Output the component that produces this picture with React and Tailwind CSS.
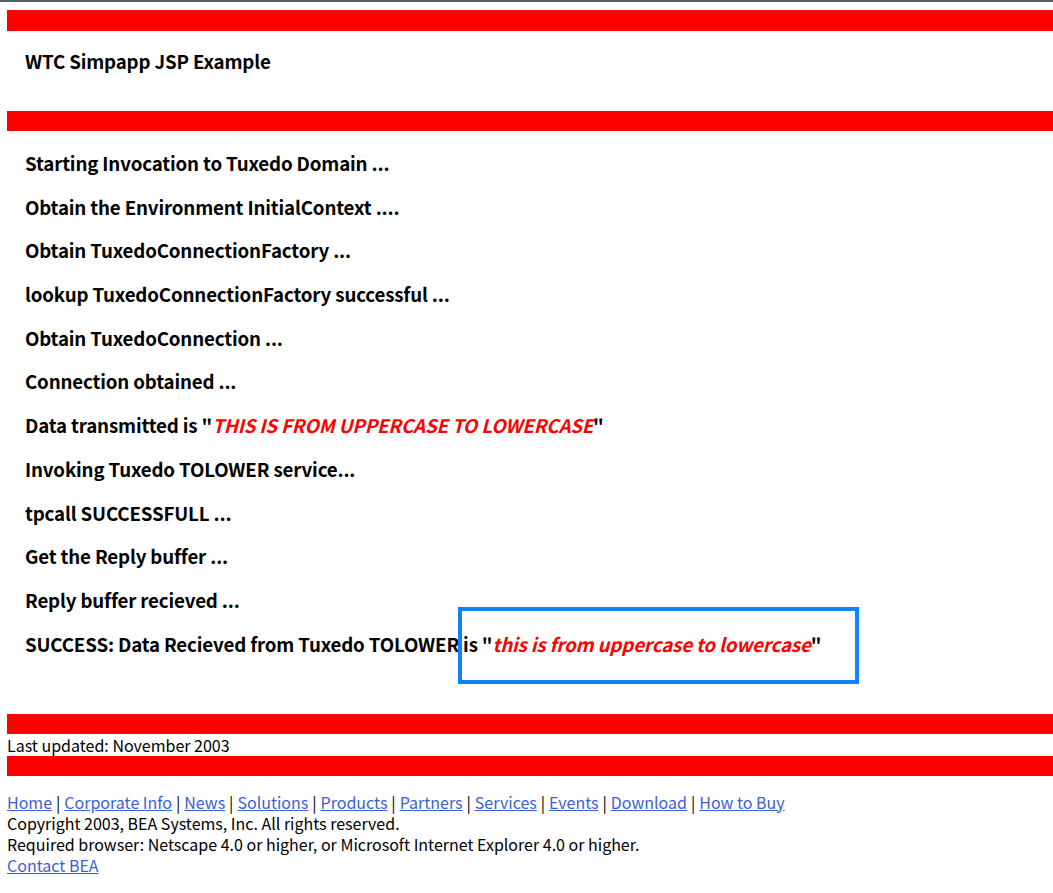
import React from "react";

const steps = [
  "Starting Invocation to Tuxedo Domain ...",
  "Obtain the Environment InitialContext ....",
  "Obtain TuxedoConnectionFactory ...",
  "lookup TuxedoConnectionFactory successful ...",
  "Obtain TuxedoConnection ...",
  "Connection obtained ...",
  null,
  "Invoking Tuxedo TOLOWER service...",
  "tpcall SUCCESSFULL ...",
  "Get the Reply buffer ...",
  "Reply buffer recieved ...",
];

const links = [
  "Home",
  "Corporate Info",
  "News",
  "Solutions",
  "Products",
  "Partners",
  "Services",
  "Events",
  "Download",
  "How to Buy",
];

const RedBar = ({ h }) => <div className={`bg-[#ff0000] ${h}`} />;

export default function App() {
  return (
    <div
      className="relative min-h-[893px] bg-white text-black"
      style={{ fontFamily: '"Noto Sans CJK KR", "Noto Sans", sans-serif' }}
    >
      <div className="h-[2px] bg-[#56606a]" />
      <div className="pl-[7px] pt-[8px]">
        <RedBar h="h-[21px]" />
        <div className="h-[80px] pl-[18px] pt-[17px]">
          <h3 className="text-[18.72px] font-bold leading-[25px] tracking-[-0.15px]">WTC Simpapp JSP Example</h3>
        </div>
        <RedBar h="h-[20px]" />

        <div className="flex flex-col gap-[18.7px] pl-[18px] pt-[19px] pb-[58px] tracking-[-0.15px]">
          {steps.map((s, i) =>
            s === null ? (
              <h3 key={i} className="text-[18.72px] font-bold leading-[25px]">
                Data transmitted is "<i className="text-[#ff0000]">THIS IS FROM UPPERCASE TO LOWERCASE</i>"
              </h3>
            ) : (
              <h3 key={i} className="text-[18.72px] font-bold leading-[25px]">
                {s}
              </h3>
            )
          )}
          <h3 className="text-[18.72px] font-bold leading-[25px]">
            SUCCESS: Data Recieved from Tuxedo TOLOWER is "<i className="text-[#ff0000]">this is from uppercase to lowercase</i>"
          </h3>
        </div>

        <RedBar h="h-[20px]" />
        <div className="h-[22px] text-[16px] leading-[22px]">Last updated: November 2003</div>
        <RedBar h="h-[20px]" />

        <div className="pt-[16px] text-[16px] leading-[21px]">
          <div>
            {links.map((l, i) => (
              <span key={l}>
                {i > 0 && <span className="mx-[0.4px]"> | </span>}
                <a href="#" className="text-[#3c5fd8] underline">
                  {l}
                </a>
              </span>
            ))}
          </div>
          <div>Copyright 2003, BEA Systems, Inc. All rights reserved.</div>
          <div>Required browser: Netscape 4.0 or higher, or Microsoft Internet Explorer 4.0 or higher.</div>
          <a href="#" className="text-[#3c5fd8] underline">
            Contact BEA
          </a>
        </div>
      </div>

      <div className="absolute left-[458px] top-[607px] h-[77px] w-[401px] border-4 border-[#1283f5]" />
    </div>
  );
}
